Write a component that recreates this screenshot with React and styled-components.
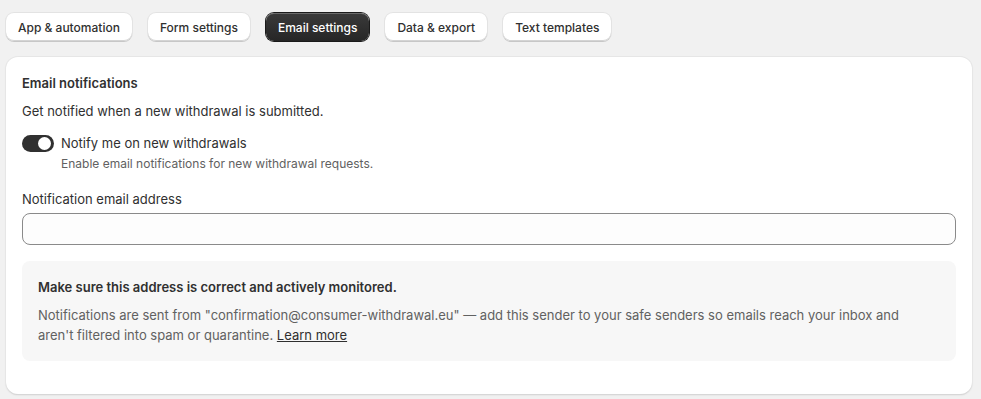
import React, { useState } from 'react'
import styled, { createGlobalStyle } from 'styled-components'

const GlobalStyle = createGlobalStyle`
  html, body {
    margin: 0;
    padding: 0;
    background: #f1f1f1;
    font-family: Inter, "Noto Sans", sans-serif;
    color: #303030;
    -webkit-font-smoothing: antialiased;
  }
  * { box-sizing: border-box; }
`

const Page = styled.div`
  padding: 13px 9px 6px 6px;
  display: flex;
  flex-direction: column;
  gap: 16px;
`

const Tabs = styled.div`
  display: flex;
  gap: 16px;
`

const Tab = styled.button`
  height: 28px;
  padding: 0 12px;
  border-radius: 8px;
  font-family: inherit;
  font-size: 12px;
  font-weight: 550;
  cursor: pointer;
  border: none;
  color: ${(p) => (p.$active ? '#fff' : '#303030')};
  background: ${(p) => (p.$active ? 'linear-gradient(#3a3a3a, #262626)' : '#fff')};
  box-shadow: ${(p) =>
    p.$active
      ? '0 0 0 1px #1a1a1a, inset 0 1px 0 rgba(255,255,255,0.25)'
      : '0 1px 0 rgba(0,0,0,0.12), inset 0 -1px 0 #d4d4d4, 0 0 0 1px #e3e3e3'};
`

const Card = styled.div`
  background: #fff;
  border-radius: 12px;
  box-shadow: 0 1px 0 rgba(26, 26, 26, 0.07), 0 0 0 1px #e6e6e6, 0 1px 2px rgba(0,0,0,0.12);
  padding: 16px 16px 33px;
  display: flex;
  flex-direction: column;
`

const Heading = styled.h2`
  margin: 0;
  font-size: 13px;
  font-weight: 600;
  line-height: 20px;
`

const Text = styled.p`
  margin: 8px 0 0;
  font-size: 13px;
  line-height: 20px;
`

const ToggleRow = styled.label`
  margin-top: 12px;
  display: grid;
  grid-template-columns: 32px 1fr;
  column-gap: 7px;
  row-gap: 1px;
  align-items: center;
  cursor: pointer;
`

const Track = styled.span`
  width: 32px;
  height: 17px;
  border-radius: 9px;
  background: ${(p) => (p.$on ? '#303030' : '#c9c9c9')};
  position: relative;
  display: block;
  &::after {
    content: '';
    position: absolute;
    top: 2px;
    left: ${(p) => (p.$on ? '16px' : '2px')};
    width: 13px;
    height: 13px;
    border-radius: 50%;
    background: #fff;
  }
`

const ToggleLabel = styled.span`
  font-size: 13px;
  line-height: 20px;
`

const Help = styled.span`
  grid-column: 2;
  font-size: 12px;
  line-height: 20px;
  color: #616161;
`

const Field = styled.div`
  margin-top: 15px;
  display: flex;
  flex-direction: column;
  gap: 4px;
`

const Label = styled.label`
  font-size: 13px;
  line-height: 20px;
`

const Input = styled.input`
  height: 32px;
  border: 1px solid #8a8a8a;
  border-radius: 8px;
  background: #fdfdfd;
  padding: 0 12px;
  font-family: inherit;
  font-size: 13px;
  outline: none;
`

const Banner = styled.div`
  margin-top: 16px;
  background: #f7f7f7;
  border-radius: 8px;
  padding: 16px 40px 16px 16px;
  display: flex;
  flex-direction: column;
  gap: 8px;
`

const BannerTitle = styled.div`
  font-size: 13px;
  font-weight: 600;
  line-height: 20px;
`

const BannerBody = styled.p`
  margin: 0;
  font-size: 13px;
  line-height: 20px;
  color: #616161;
  a {
    color: #303030;
    text-decoration: underline;
  }
`

const tabs = ['App & automation', 'Form settings', 'Email settings', 'Data & export', 'Text templates']

export default function App() {
  const [active, setActive] = useState('Email settings')
  const [on, setOn] = useState(true)
  return (
    <>
      <GlobalStyle />
      <Page>
        <Tabs>
          {tabs.map((t) => (
            <Tab key={t} $active={t === active} onClick={() => setActive(t)}>
              {t}
            </Tab>
          ))}
        </Tabs>
        <Card>
          <Heading>Email notifications</Heading>
          <Text>Get notified when a new withdrawal is submitted.</Text>
          <ToggleRow onClick={() => setOn(!on)}>
            <Track $on={on} />
            <ToggleLabel>Notify me on new withdrawals</ToggleLabel>
            <Help>Enable email notifications for new withdrawal requests.</Help>
          </ToggleRow>
          <Field>
            <Label htmlFor="notify-email">Notification email address</Label>
            <Input id="notify-email" type="email" />
          </Field>
          <Banner>
            <BannerTitle>Make sure this address is correct and actively monitored.</BannerTitle>
            <BannerBody>
              Notifications are sent from "confirmation@consumer-withdrawal.eu" — add this sender to your safe
              senders so emails reach your inbox and aren't filtered into spam or quarantine.{' '}
              <a href="#">Learn more</a>
            </BannerBody>
          </Banner>
        </Card>
      </Page>
    </>
  )
}
